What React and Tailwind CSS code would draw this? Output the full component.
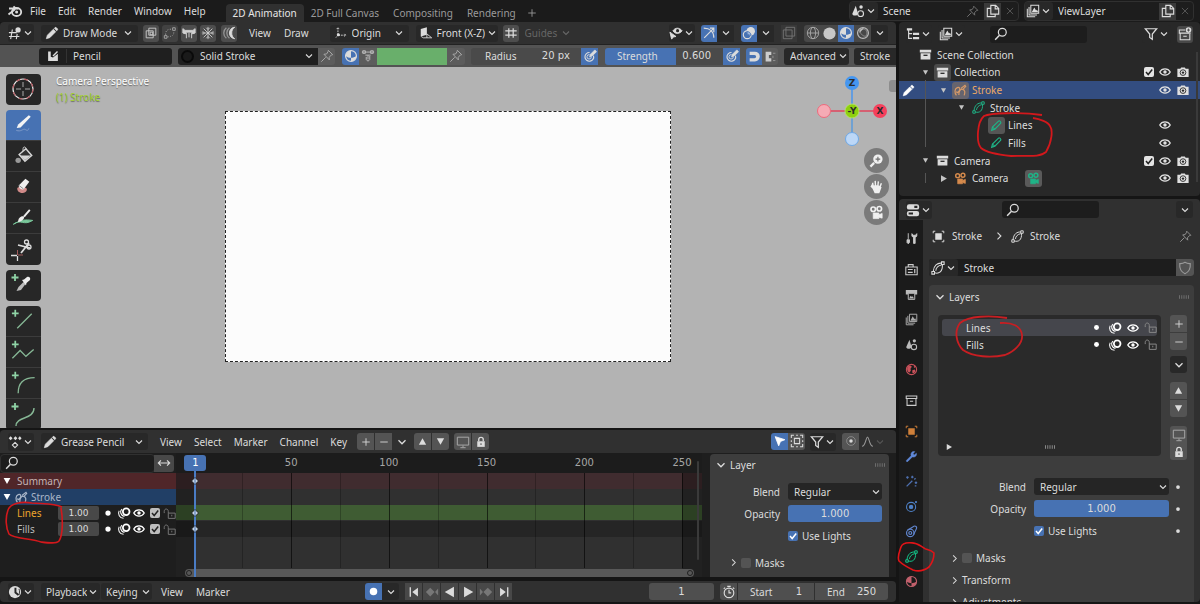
import { useState } from "react";
import clsx from "clsx";

const icons = {
    blender: (
        <>
            <path d="M2 5.5h7L6.5 3.4M1.5 11.5 8 6.2" strokeWidth="1.8" />
            <ellipse cx="9.6" cy="9" rx="4.6" ry="4" strokeWidth="1.8" />
            <circle cx="9.6" cy="9" r="1.5" fill="currentColor" stroke="none" />
        </>
    ),
    chevron: <path d="m4 6 4 4 4-4" strokeWidth="1.5" />,
    right: <path d="m6 3.5 4.5 4.5L6 12.5" strokeWidth="1.5" />,
    viewport: (
        <>
            <path d="M1 7.5h9M1 12h12M5 4 3 15M10.5 9 9.5 15" strokeWidth="1.3" />
            <circle cx="11.5" cy="4.5" r="3" fill="currentColor" stroke="none" />
        </>
    ),
    pencil: <path d="m1.5 14.5 1.2-4 6.8-6.8 2.8 2.8-6.8 6.8-4 1.2ZM10.5 2.7l1-1 1-.2 2 2-.2 1-1 1Z" fill="currentColor" strokeWidth=".8" />,
    pencilLine: <path d="m2 14 1-4 7.500-7.500c1-1 3.500 1 2.700 2.700L6 12.500ZM3 10l3 2.500" strokeWidth="1.400" />,
    boxes: <path d="M2.5 5.5h8v8h-8zM5.5 2.5h8v8h-8zM7 7h3v3H7z" />,
    points: (
        <>
            <path d="M1.5 11h3v3h-3zM11 2h3v3h-3z" />
            <path d="M5 12.5c8-1 7-3 7.5-7M3 10C3 4 6 4 10 3.5" strokeDasharray="1.2 1.8" />
        </>
    ),
    weights: <path d="M1 3v5l3 1 1-2h6l1 2 3-1V3l-2.5 2h-9ZM5 8v6M8 8v5M11 8v6" fill="currentColor" strokeWidth="1.1" />,
    snow: <path d="M8 1v14M1 8h14M3 3l10 10M13 3 3 13M6 2l2 2 2-2M6 14l2-2 2 2M2 6l2 2-2 2M14 6l-2 2 2 2" />,
    arcs: (
        <>
            <path d="M5 2C1 5 1 11 5 14M8.5 2c-4 3-4 9 0 12" opacity=".5" strokeWidth="1.5" />
            <path d="M14.5 1.5C10 4 10 12 14.5 14.5 6.500 14 6.500 2 14.5 1.5Z" fill="currentColor" />
        </>
    ),
    axes: (
        <>
            <path d="M4.5 2v8.5h9M4.5 10.5 2 13.5M3 3.5 4.5 2 6 3.5M12 9l1.5 1.5L12 12" strokeDasharray="2 1" />
            <circle cx="5" cy="10" r="1.8" fill="currentColor" stroke="none" />
        </>
    ),
    front: (
        <>
            <path d="M2 3.5 9 1.5v8.500L2 12Z" fill="currentColor" stroke="none" />
            <path d="M9 9l5.500 4.500H5L2.500 12M9 9.500v4" />
        </>
    ),
    grid: <path d="M1.5 5.5h13M1.5 10.5h13M5.5 2.5v11M10.5 2.5v11" strokeWidth="1.4" />,
    eyeArrow: (
        <>
            <path d="M4.5 5.5c2.5-4 7.5-4 10.5 0-3 4-8 4-10.5 0Z" fill="currentColor" />
            <circle cx="9.8" cy="5.3" r="1.8" fill="#282828" stroke="none" />
            <path d="m1 7 2 8 2-2.5L8 12Z" fill="currentColor" />
        </>
    ),
    gizmo: <path d="M2 2.5c7 0 11.5 4 11.5 11M2.5 13.5 13 3M9 2.5h4.5V7" strokeWidth="1.3" />,
    overlays: (
        <>
            <circle cx="10" cy="6" r="4.8" fill="currentColor" stroke="none" />
            <circle cx="6" cy="10" r="4.5" strokeWidth="1.3" />
            <path d="M5.4 6.4a4.500 4.500 0 0 1 5 4.200 4.800 4.800 0 0 1-5-4.200Z" fill="#9db7dc" stroke="#4772b3" />
        </>
    ),
    xray: <path d="M1.5 4.5h10v10h-10zM4.500 1.500h10v10h-10z" />,
    wire: (
        <>
            <circle cx="8" cy="8" r="6.5" />
            <ellipse cx="8" cy="8" rx="3" ry="6.5" />
            <path d="M1.5 8h13" />
        </>
    ),
    solid: <circle cx="8" cy="8" r="6.5" fill="currentColor" stroke="none" />,
    material: (
        <>
            <circle cx="8" cy="8" r="6.2" strokeWidth="1.4" />
            <path d="M8 1.8A6.2 6.2 0 0 0 1.8 8c2 1.6 4 2 6.2 2ZM8 10v4.200A6.2 6.2 0 0 0 14.2 8C12.5 9.500 10 10 8 10Z" fill="currentColor" stroke="none" />
        </>
    ),
    rendered: (
        <>
            <circle cx="8" cy="8" r="6.2" strokeWidth="1.4" />
            <path d="M12 5.5c-2-3-6-2.5-7.5.5.5 3 4 6.5 7 5.5 1-1.5 1.3-4 .5-6Z" opacity=".6" />
            <path d="M4 5c1.5-2 3-2.500 5-2.300L4 8Z" fill="currentColor" stroke="none" />
        </>
    ),
    brush: (
        <>
            <path d="M1.5 2v12.5h13V5L8 10 5 9V2Z" fill="currentColor" stroke="none" />
            <path d="m8 8 6-6" strokeWidth="2" />
        </>
    ),
    pin: <path d="m9.5 1.5 5 5-1.5.3-2.5 2.7.2 3L4.500 6l3-.3L9.200 3ZM6.500 9.500l-5 5" strokeWidth="1.1" />,
    nodes: <path d="M1 3.500h14M5 2v3H2V2ZM14 2v3h-3V2ZM5 7h6M6 9v3l2 2 2-2V8M8 7v5" strokeWidth="1.1" />,
    pressure: (
        <>
            <path d="M12 7.500a5 5 0 1 1-4.500-3.500" strokeWidth="1.3" />
            <path d="M9.500 9a2.500 2.500 0 1 1-2-2.500" />
            <path d="m7.500 9 1-3 5-5 2 2-5 5Z" fill="currentColor" strokeWidth=".8" />
        </>
    ),
    magnet: <path d="M2 2h6.500a6 6 0 0 1 0 12H2v-4h6a2 2 0 0 0 0-4H2Z" fill="currentColor" stroke="none" />,
    erase: (
        <>
            <path d="M2 2h7v4H6v4h3v4H2Z" fill="currentColor" stroke="none" />
            <path d="M11 4h3M11 7v3M11 13h3" opacity=".6" />
        </>
    ),
    scene: (
        <>
            <path d="M5.500 2 1.500 11c0 3 6 3 6.500 0Z" fill="currentColor" stroke="none" />
            <circle cx="11" cy="11" r="3.3" strokeWidth="1.3" />
            <circle cx="11.5" cy="3.5" r="2" fill="currentColor" stroke="none" />
        </>
    ),
    copy: <path d="M5.500 1.500h5.500l3.500 3.500v6.500h-9ZM10.500 2v3.500H14M5 5H1.500v9.500h9V12" strokeWidth="1.3" />,
    x: <path d="m3 3 10 10M13 3 3 13" strokeWidth="1.2" />,
    images: (
        <>
            <path d="M5.500 1.500h9v9h-9zM3.500 3.500v9h9M1.500 5.500v9h9" strokeWidth="1.2" />
            <path d="m6.500 9.500 3-5.500 2 3.500 1-1 1.500 3Z" fill="currentColor" stroke="none" />
        </>
    ),
    tree: (
        <>
            <path d="M3 3v10h4M3 7.500h4" strokeWidth="1.3" />
            <path d="M1 1.500h6v2.500H1zM8 6.500h7V9H8zM8 11.500h7V14H8z" fill="currentColor" stroke="none" />
        </>
    ),
    search: (
        <>
            <circle cx="9.5" cy="6" r="4.5" strokeWidth="1.4" />
            <path d="m6.300 9.500-5 5" strokeWidth="1.7" />
        </>
    ),
    filter: <path d="M1.500 2h13L9.500 8v6l-3-2V8Z" strokeWidth="1.4" />,
    newColl: (
        <>
            <path d="M8 3.500H1.500v3.500h13M2.500 7v7.500h11V8M6 10.500h4" strokeWidth="1.2" />
            <circle cx="12" cy="3.5" r="3.2" fill="currentColor" stroke="none" />
            <path d="M12 1.800v3.400M10.300 3.500h3.400" stroke="#484848" />
        </>
    ),
    archive: (
        <>
            <path d="M1 2h14v3.500H1zM2 6.500h12V14H2z" fill="currentColor" stroke="none" />
            <path d="M5.500 9h5" stroke="#282828" strokeWidth="1.6" />
        </>
    ),
    archiveLine: <path d="M1.500 2.500h13v3h-13zM2.500 6v8h11V6M6 9h4" strokeWidth="1.3" />,
    gpData: (
        <>
            <path d="M12 1h3v3h-3zM1 12h3v3H1z" strokeWidth="1.2" />
            <path d="M12 2.500C7.500 2 3 5 2.500 12" strokeWidth="1.2" />
            <path d="M4 13.500c5 1.500 9.500-1 9-9.500" strokeWidth="1.2" />
            <path d="M12 4.500C8.500 5 5.500 8 5.500 11" strokeWidth="1.2" />
        </>
    ),
    gpObject: (
        <>
            <path d="M3 14C.5 11 .5 6 4 4.500c3-1 4 1.500 2.500 4S3 11.500 3.500 9" strokeWidth="1.5" />
            <path d="M6 13.500C5.500 9 8 6 10.500 6.500c3 .5 3.500 4 2 7.500" strokeWidth="1.5" />
            <path d="m8.500 5.500 5-4 1 1.500-3.500 3.500" strokeWidth="1.3" />
        </>
    ),
    movie: (
        <>
            <circle cx="4.5" cy="4.5" r="2.4" strokeWidth="1.8" />
            <circle cx="11" cy="4" r="2.4" strokeWidth="1.8" />
            <path d="M4.500 8.500h6v2l3.500-1.500v5L10.500 13v1.500h-6Z" fill="currentColor" strokeWidth=".8" />
        </>
    ),
    eye: (
        <>
            <path d="M1 8c3-5.500 11-5.500 14 0-3 5.500-11 5.500-14 0Z" strokeWidth="1.7" />
            <circle cx="8" cy="8" r="2.300" fill="currentColor" stroke="none" />
        </>
    ),
    photo: (
        <>
            <path d="M.5 3.500h4l1-1.500h5l1 1.500h4V14.500H.5Z" fill="currentColor" stroke="none" />
            <circle cx="8" cy="8.8" r="3.800" stroke="#282828" strokeWidth="1.2" />
            <circle cx="8" cy="8.8" r="1.600" fill="#282828" stroke="none" />
        </>
    ),
    props: (
        <>
            <rect x="1" y="1.500" width="14" height="6" rx="2.5" fill="currentColor" stroke="none" />
            <rect x="1" y="9" width="14" height="6" rx="2.5" fill="currentColor" stroke="none" />
            <path d="M9.500 4.500h3.500M3 12h5" stroke="#282828" strokeWidth="2.5" />
        </>
    ),
    object: (
        <>
            <path d="M4 1.500H1.500V4M12 1.500h2.500V4M4 14.500H1.500V12M12 14.500h2.500V12" strokeWidth="1.2" />
            <path d="M4 4h8v8H4z" fill="currentColor" stroke="none" />
        </>
    ),
    shield: <path d="M8 1.500c2 1.300 4 1.700 6 1.500.5 6-1.500 9.500-6 11.500C3.500 12.500 1.500 9 2 3c2 .2 4-.2 6-1.500Z" strokeWidth="1.3" />,
    tools: <path d="M4 1.500v7M2.500 9.500h3V13l-1.500 1.500L2.500 13ZM8.500 2v3l2 2v7h2V7l2-2V2l-1.500 2h-3Z" fill="currentColor" strokeWidth="1.1" />,
    render: (
        <>
            <path d="M1 5h14v9.500H1zM4 5V2h6v3" strokeWidth="1.3" />
            <path d="M3.500 8h6M3.500 11.500h6M12 7.500v5" strokeWidth="1.5" />
        </>
    ),
    printer: (
        <>
            <path d="M1 2.500h14V8h-3V6.500H4V8H1Z" fill="currentColor" stroke="none" />
            <path d="M4 6.500h8V14H4Z" strokeWidth="1.2" />
            <path d="m5 13 2-3.500 1.500 1.500 1-1 1.500 3Z" fill="currentColor" stroke="none" />
        </>
    ),
    world: (
        <>
            <circle cx="8" cy="8" r="6.3" strokeWidth="1.3" />
            <path d="M3 5c2-3 4-2 5-1S6 7 7 8s-1 3-2 4C3 10 2 8 3 5ZM9 9l3-1 1 2-2 2.500L9 12ZM11 3l2 2-2 1Z" fill="currentColor" stroke="none" />
        </>
    ),
    wrench: <path d="m2 12.500 5.500-5.500c-1-3 1.500-6 4.500-5L10 4.500 11.500 6 14 4c1 3-2 5.500-5 4.500L3.500 14C2 15 1 13.500 2 12.500Z" fill="currentColor" strokeWidth=".6" />,
    wand: <path d="m2 14 7-7M11.500 5.500 13 4M3 1.500v3M1.500 3h3M9 1v3M7.500 2.500h3M13.500 8v3M12 9.500h3M12 13.500h2" strokeWidth="1.6" />,
    physics: (
        <>
            <circle cx="7.5" cy="8.5" r="5.6" strokeWidth="1.3" />
            <circle cx="7.5" cy="8.5" r="2.7" fill="currentColor" stroke="none" />
            <circle cx="13.5" cy="2.5" r="1.4" fill="currentColor" stroke="none" />
        </>
    ),
    constraint: (
        <>
            <circle cx="6.5" cy="9.8" r="4.6" strokeWidth="1.5" />
            <circle cx="6.5" cy="9.8" r="1.8" strokeWidth="1.5" />
            <path d="M3 6.500 11 1.500c2-1 4 1 3 3l-3.500 7.500" strokeWidth="1.4" />
        </>
    ),
    onion: (
        <>
            <circle cx="10.5" cy="6.5" r="3.8" strokeWidth="2" />
            <path d="M5.500 3.500c-2.500 2.500-1.500 7.500 3 8.500M2.500 5.500c-2 3.500.5 8.500 5 8.500" strokeWidth="1.2" />
        </>
    ),
    unlock: <path d="M6.500 7.500H15V14H6.500zM6.500 7.500V5.500C6.500 1.500 1.500 1.500 1.500 5.500v2M10.800 9.500v2" strokeWidth="1.2" />,
    lock: (
        <>
            <path d="M3 7h10v7.500H3z" fill="currentColor" stroke="none" />
            <path d="M5 7V4.500c0-3.500 6-3.500 6 0V7" strokeWidth="1.8" />
            <path d="M8 9.500v2.500" stroke="#545454" strokeWidth="1.4" />
        </>
    ),
    screen: <path d="M1.500 2.500h13v9h-13zM8 12v2M5 14.500h6" strokeWidth="1.1" />,
    plus: <path d="M8 2v12M2 8h12" strokeWidth="1.4" />,
    minus: <path d="M2 8h12" strokeWidth="1.4" />,
    up: <path d="m8 4 4.500 8h-9Z" fill="currentColor" stroke="none" />,
    down: <path d="m8 12 4.500-8h-9Z" fill="currentColor" stroke="none" />,
    play: <path d="m3.500 2 10.500 6-10.500 6Z" fill="currentColor" stroke="none" />,
    back: <path d="M12.500 2 2 8l10.500 6Z" fill="currentColor" stroke="none" />,
    first: <path d="M3 2.500h1.500v11H3zM12.500 3v10L6 8Z" fill="currentColor" stroke="none" />,
    last: <path d="M11.500 2.500H13v11h-1.500zM3.500 3v10L10 8Z" fill="currentColor" stroke="none" />,
    prevKey: <path d="m6 3 5 5-5 5-5-5ZM15 4v8l-3.500-4Z" fill="currentColor" stroke="none" />,
    nextKey: <path d="m10 3 5 5-5 5-5-5ZM1 4v8l3.500-4Z" fill="currentColor" stroke="none" />,
    record: <circle cx="8" cy="8" r="4" fill="currentColor" stroke="none" />,
    dot: <circle cx="8" cy="8" r="3" fill="currentColor" stroke="none" />,
    cursorArrow: <path d="m2.500 3 11 3.500-5 2-2 5Z" fill="currentColor" />,
    frameSel: <path d="M4.500 1.500h-3v3M11.500 1.500h3v3M4.500 14.500h-3v-3M11.500 14.500h3v-3M7 1.500h2M7 14.500h2M1.500 7v2M14.500 7v2M5 5h6v6H5z" strokeWidth="1.2" />,
    proportional: (
        <>
            <circle cx="8" cy="8" r="5" opacity=".4" />
            <circle cx="8" cy="8" r="2" fill="currentColor" stroke="none" />
        </>
    ),
    curve: <path d="M1.500 14C6 13 6 2.500 8 2.500S10 13 14.500 14" strokeWidth="1.3" />,
    dope: (
        <>
            <path d="m3 1.500 2.200 2.200L3 6 .8 3.700ZM8.500 1.500l2.200 2.200L8.500 6 6.300 3.700ZM13.500 1.500l2 2.200-2 2.300-2-2.300Z" fill="currentColor" stroke="none" />
            <path d="m8 8.500 3 3-3 3-3-3Z" strokeWidth="1.3" />
        </>
    ),
    arrows: <path d="M1.500 8h13M4.500 5l-3 3 3 3M11.500 5l3 3-3 3" strokeWidth="1.3" />,
    clock: (
        <>
            <circle cx="8" cy="8" r="7" fill="currentColor" stroke="none" />
            <path d="M8.500 3v5.500l3.500 3" stroke="#282828" strokeWidth="2.2" />
            <path d="M12.500 4.500c1 2 1 5 0 7" stroke="#282828" />
        </>
    ),
    stopwatch: (
        <>
            <circle cx="8" cy="9" r="5.5" strokeWidth="1.3" />
            <path d="M8 5.500V9h2.500M6 1.500h4M12.500 3l1.500 1.500M2 4.500 3.500 3" strokeWidth="1.3" />
        </>
    ),
    grip: <path d="M0 6.500h16M0 9.500h16" strokeWidth="1.500" strokeDasharray="1.600 2" />,
    zoomIn: (
        <>
            <circle cx="9.5" cy="6.5" r="5" fill="currentColor" stroke="none" />
            <path d="m5.500 10.500-4 4" strokeWidth="2.4" />
            <path d="M9.500 4v5M7 6.500h5" stroke="#6e6e6e" strokeWidth="1.2" />
        </>
    ),
    hand: <path d="m2 7.500 3 3-1.200-6.500M7 8.500 6.600 2M9.300 8.500 10 2.500M11.300 9.500l1.900-5M4 9l2.500 5.500h4L12.500 9 10 7.500H6Z" strokeWidth="1.500" fill="currentColor" />,
};

function Icon({ name, className = "size-4" }) {
    return (
        <svg
            viewBox="0 0 16 16"
            fill="none"
            stroke="currentColor"
            strokeWidth="1"
            aria-hidden="true"
            className={clsx("shrink-0", className)}
        >
            {icons[name]}
        </svg>
    );
}

function IconButton({ icon, label, className = "w-4 rounded-[3px] bg-[#4d4d4d]", size = "size-[14px]" }) {
    return (
        <button aria-label={label} className={clsx("flex h-[17px] shrink-0 items-center justify-center", className)}>
            <Icon name={icon} className={size} />
        </button>
    );
}

function MenuButton({ icon, label, className = "w-[26px]" }) {
    return (
        <button
            aria-label={label}
            className={clsx("flex h-[18px] shrink-0 items-center justify-center rounded-[3px] bg-[#282828]", className)}
        >
            <Icon name={icon} className="size-[14px]" />
            <Icon name="chevron" className="size-[12px]" />
        </button>
    );
}

function Select({ icon, label, value, className }) {
    return (
        <label className={clsx("flex h-[17px] shrink-0 items-center rounded-[3px]", className)}>
            {icon && <Icon name={icon} className="mr-1 size-[14px]" />}
            <select aria-label={label} className="min-w-0 flex-1 appearance-none bg-transparent outline-none">
                <option>{value}</option>
            </select>
            <Icon name="chevron" className="size-[12px]" />
        </label>
    );
}

function SearchBox({ className }) {
    return (
        <label className={clsx("flex h-[17px] items-center rounded-[3px] bg-[#1d1d1d] px-1", className)}>
            <Icon name="search" className="size-[14px]" />
            <input aria-label="Search" className="w-full min-w-0 bg-transparent outline-none" />
        </label>
    );
}

function Check({ label, checked, className = "bg-[#545454] checked:bg-[#4772b3]", mark = "text-white", children }) {
    return (
        <label className="flex shrink-0 items-center gap-1">
            <span className="relative flex">
                <input
                    type="checkbox"
                    aria-label={label}
                    defaultChecked={checked}
                    className={clsx("peer size-[10px] appearance-none rounded-[2px]", className)}
                />
                <svg viewBox="0 0 10 10" className={clsx("pointer-events-none absolute inset-0 hidden peer-checked:block", mark)}>
                    <path d="m2 5 2.200 2.500L8.200 2.500" fill="none" stroke="currentColor" strokeWidth="1.5" />
                </svg>
            </span>
            {children}
        </label>
    );
}

function NumField({ label, value, className }) {
    return (
        <label className={clsx("flex h-[17px] items-center", className)}>
            <span>{label}</span>
            <input
                defaultValue={value}
                className="w-full min-w-0 bg-transparent text-right font-[DejaVu_Sans] outline-none"
            />
        </label>
    );
}

const menus = ["File", "Edit", "Render", "Window", "Help"];
const workspaces = ["2D Animation", "2D Full Canvas", "Compositing", "Rendering"];

function TopBar() {
    const [active, setActive] = useState("2D Animation");

    return (
        <header className="flex h-[22px] shrink-0 items-center bg-[#1b1b1b] px-[7px]">
            <Icon name="blender" className="size-4" />
            <nav className="ml-[7px] flex gap-3">
                {menus.map((m) => (
                    <button key={m}>{m}</button>
                ))}
            </nav>
            <div className="ml-5 flex self-end">
                {workspaces.map((w) => (
                    <button
                        key={w}
                        onClick={() => setActive(w)}
                        className={clsx(
                            "h-[18px] rounded-t-[4px] px-[7px]",
                            active === w ? "bg-[#303030] text-[#e6e6e6]" : "text-[#9a9a9a]"
                        )}
                    >
                        {w}
                    </button>
                ))}
                <button aria-label="Add workspace" className="ml-1 text-[#9a9a9a]">
                    <Icon name="plus" className="size-[10px]" />
                </button>
            </div>
            <div className="ml-auto flex gap-[7px]">
                <IdPicker icon="scene" label="Scene" pin />
                <IdPicker icon="images" label="ViewLayer" />
            </div>
        </header>
    );
}

function IdPicker({ icon, label, pin }) {
    return (
        <div className="flex h-[18px] w-[168px] items-center rounded-[3px] bg-[#1d1d1d] outline-1 outline-[#303030]">
            <MenuButton icon={icon} label={`Browse ${label}`} className="w-[28px]" />
            <input aria-label={label} defaultValue={label} className="w-full min-w-0 bg-transparent px-[5px] outline-none" />
            {pin && <Icon name="pin" className="mr-[5px] size-[13px] text-[#777]" />}
            <IconButton icon="copy" label={`New ${label}`} className="w-[17px] bg-[#3a3a3a]" />
            <IconButton icon="x" label={`Remove ${label}`} className="w-[17px] text-[#666]" size="size-[10px]" />
        </div>
    );
}

function ViewportHeader() {
    return (
        <div className="flex h-[22px] shrink-0 items-center rounded-t-[4px] bg-[#303030] px-2">
            <MenuButton icon="viewport" label="Editor type" />
            <Select icon="pencil" label="Mode" value="Draw Mode" className="ml-[7px] w-[97px] bg-[#282828] px-1" />
            <div className="ml-[5px] flex gap-[3px] text-[#d0d0d0]">
                <IconButton icon="boxes" label="Multiframe" />
                <IconButton icon="points" label="Points" className="w-4 rounded-[3px] bg-[#424242] text-[#aaa]" />
                <IconButton icon="weights" label="Weights" />
                <IconButton icon="snow" label="Additive" />
            </div>
            <div className="ml-[5px]">
                <IconButton icon="arcs" label="Onion" />
            </div>
            <nav className="ml-3 flex gap-[13px]">
                <button>View</button>
                <button>Draw</button>
            </nav>
            <Select icon="axes" label="Stroke placement" value="Origin" className="ml-[21px] w-[79px] bg-[#282828] px-1" />
            <Select icon="front" label="Drawing plane" value="Front (X-Z)" className="ml-[7px] w-[82px] bg-[#282828] pl-[3px]" />
            <div className="ml-[5px] flex gap-[6px]">
                <IconButton icon="grid" label="Use guides" />
                <Select label="Guides" value="Guides" className="w-[47px] text-[#666]" />
            </div>
            <div className="ml-auto flex items-center">
                <MenuButton icon="eyeArrow" label="Visibility" className="mr-[6px]" />
                <IconButton icon="gizmo" label="Gizmos" className="w-4 rounded-l-[3px] bg-[#4772b3]" />
                <IconButton icon="chevron" label="Gizmo options" className="mr-[7px] w-[17px] bg-[#282828]" size="size-[12px]" />
                <IconButton icon="overlays" label="Overlays" className="w-4 rounded-l-[3px] bg-[#4772b3]" />
                <IconButton icon="chevron" label="Overlay options" className="mr-[7px] w-[17px] bg-[#282828]" size="size-[12px]" />
                <IconButton icon="xray" label="X-Ray" className="mr-[7px] w-4 bg-[#383838] text-[#777]" />
                <IconButton icon="wire" label="Wireframe" className="w-[17px] rounded-l-[3px] bg-[#484848] text-[#aaa]" />
                <IconButton icon="solid" label="Solid" className="w-[17px] bg-[#484848] text-[#c8c8c8]" size="size-[15px]" />
                <IconButton icon="material" label="Material preview" className="w-[16px] bg-[#4772b3]" />
                <IconButton icon="rendered" label="Rendered" className="w-[17px] bg-[#484848] text-[#bbb]" />
                <IconButton icon="chevron" label="Shading options" className="w-[17px] rounded-r-[3px] bg-[#282828]" size="size-[12px]" />
            </div>
        </div>
    );
}

function ToolSettings() {
    return (
        <div className="flex h-[23px] shrink-0 items-center overflow-hidden border-t border-[#222] bg-[#535353] pl-[39px]">
            <div className="flex h-[17px] w-[133px] shrink-0 items-center rounded-[3px] bg-[#1f1f1f]">
                <span className="flex w-[27px] shrink-0 justify-center">
                    <Icon name="brush" className="size-[12px]" />
                </span>
                <input aria-label="Brush" defaultValue="Pencil" className="w-full min-w-0 border-l border-[#333] pl-[6px] outline-none" />
            </div>
            <div className="ml-[6px] flex shrink-0">
                <label className="flex h-[17px] w-[140px] items-center rounded-l-[3px] bg-[#1f1f1f] px-[3px]">
                    <span className="mr-[6px] size-[13px] shrink-0 rounded-full border-2 border-[#0a0a0a] bg-[#1a1a1a]" />
                    <select aria-label="Material" className="min-w-0 flex-1 appearance-none bg-transparent outline-none">
                        <option>Solid Stroke</option>
                    </select>
                    <Icon name="chevron" className="size-[12px]" />
                </label>
                <IconButton icon="pin" label="Pin material" className="w-[17px] rounded-r-[3px] bg-[#5c5c5c] text-[#aaa]" />
            </div>
            <div className="ml-[7px] flex shrink-0">
                <IconButton icon="material" label="Use material color" className="w-[17px] rounded-l-[3px] bg-[#4772b3]" />
                <IconButton icon="nodes" label="Use vertex color" className="w-[18px] bg-[#5c5c5c] text-[#bbb]" />
                <button aria-label="Color" className="h-[17px] w-[70px] bg-[#69af6b]" />
                <IconButton icon="pin" label="Pin color" className="w-[18px] rounded-r-[3px] bg-[#5c5c5c] text-[#aaa]" />
            </div>
            <div className="ml-[6px] flex shrink-0">
                <NumField label="Radius" value="20 px" className="w-[110px] rounded-l-[3px] bg-[#4a4a4a] pr-[11px] pl-[14px]" />
                <IconButton icon="pressure" label="Radius pressure" className="w-[17px] bg-[#4772b3]" />
            </div>
            <div className="ml-[7px] flex shrink-0">
                <NumField
                    label="Strength"
                    value="0.600"
                    className="w-[118px] rounded-l-[3px] bg-[#4a4a4a] bg-linear-to-r from-[#4772b3] from-60% to-[#4a4a4a] to-60% pr-[12px] pl-[12px]"
                />
                <IconButton icon="pressure" label="Strength pressure" className="w-[17px] bg-[#4772b3]" />
            </div>
            <div className="ml-[6px] flex shrink-0">
                <IconButton icon="magnet" label="Caps round" className="w-[16px] rounded-l-[3px] bg-[#4772b3]" size="size-[13px]" />
                <IconButton icon="erase" label="Caps flat" className="w-[16px] rounded-r-[3px] bg-[#5c5c5c] text-[#ccc]" size="size-[13px]" />
            </div>
            <Select label="Advanced" value="Advanced" className="ml-[6px] w-[65px] bg-[#282828] pl-[6px]" />
            <Select label="Stroke" value="Stroke" className="ml-[5px] w-[54px] bg-[#282828] pl-[6px]" />
        </div>
    );
}

const plus = <path d="M9 4v7M5.500 7.500h7" stroke="#8fd3a6" strokeWidth="1.8" />;
const shapeStroke = { fill: "none", stroke: "#86b795", strokeWidth: 1.4 };

const toolGroups = [
    [
        {
            name: "Cursor",
            art: (
                <>
                    <circle cx="17" cy="15" r="10" fill="none" stroke="#e8e8e8" strokeWidth="1.2" />
                    <circle cx="17" cy="15" r="10" fill="none" stroke="#b2555c" strokeWidth="1.2" strokeDasharray="4 4" />
                    <path d="M17 8v5M17 17v5M10 15h5M19 15h5" stroke="#aaa" />
                </>
            ),
        },
    ],
    [
        {
            name: "Draw",
            art: (
                <>
                    <path d="m10.500 18.500 1.500-3.500L23 5.500l2 1.500-10.500 11Z" fill="#f4f4f4" />
                    <path d="M10 21c5 2 7-2 9-1s3 2 4-1" fill="none" stroke="#7f9cc9" />
                </>
            ),
        },
        {
            name: "Fill",
            art: (
                <>
                    <path d="M17 13V8c0-3 4-2 3 1" fill="none" stroke="#ccc" />
                    <path d="m13 14 7-6 6 7-7 6Z" fill="#333" stroke="#d6d6d6" strokeWidth="1.5" />
                    <path d="M14 15h11l-6 5Z" fill="#d6d6d6" />
                    <circle cx="12" cy="20" r="2.800" fill="#999" />
                </>
            ),
        },
        {
            name: "Erase",
            art: (
                <>
                    <path d="M11 17c0-2 10-2 10 1 0 5-10 5-10-1Z" fill="#d08a88" />
                    <path d="m12.500 14 7-7 4 3-6 8c-2 .5-5-1-5-4Z" fill="#eee" />
                    <path d="m13 14 4.500 3.500" stroke="#888" />
                </>
            ),
        },
        {
            name: "Tint",
            art: (
                <>
                    <path d="M7 22c8-6 10 2 20-4-8-1-11-1-20 4Z" fill="#79c79a" stroke="#79c79a" />
                    <path d="m18 14 6-7" stroke="#eee" strokeWidth="2" />
                    <path d="M12 20c-.5-4 3-7 6-6 1 2-2 5-6 6Z" fill="#eee" />
                </>
            ),
        },
        {
            name: "Cutter",
            art: (
                <>
                    <path d="m15 19 8-10M12 11l12 3" stroke="#ddd" strokeWidth="1.8" />
                    <circle cx="20.5" cy="8" r="2" fill="none" stroke="#ddd" strokeWidth="1.3" />
                    <circle cx="23" cy="13" r="2" fill="none" stroke="#ddd" strokeWidth="1.3" />
                    <path d="M5 21.500h6M11.500 22v5" stroke="#ddd" strokeWidth="1.3" />
                    <path d="M12 21h5M11.500 16v5" stroke="#a05a5a" />
                </>
            ),
        },
    ],
    [
        {
            name: "Eyedropper",
            art: (
                <>
                    {plus}
                    <path d="m10.500 21 2-4 5-5 2 2-4.500 6Z" fill="#bbb" />
                    <path d="m16 10 2-.5 3-2.500c2-1 4 1 3 3l-3.500 3-.5 2.500Z" fill="#eee" />
                </>
            ),
        },
    ],
    [
        { name: "Line", art: <>{plus}<path d="m11 23 15-15" {...shapeStroke} /></> },
        { name: "Polyline", art: <>{plus}<path d="m6 22 8-8 6 6 8-7" {...shapeStroke} /></> },
        { name: "Arc", art: <>{plus}<path d="M12 26c0-10 5-16 17-16" {...shapeStroke} /></> },
        { name: "Curve", art: <>{plus}<path d="M10 27c0-10 18-6 18-18" {...shapeStroke} /></> },
    ],
];

function Toolbar() {
    const [tool, setTool] = useState("Draw");

    return (
        <div className="absolute top-[7px] bottom-0 left-[6px] flex w-[35px] flex-col gap-[5px] overflow-hidden">
            {toolGroups.map((group, i) => (
                <div key={i} className="flex shrink-0 flex-col divide-y divide-[#3c3c3c] overflow-hidden rounded-[4px]">
                    {group.map((t) => (
                        <button
                            key={t.name}
                            aria-label={t.name}
                            onClick={() => setTool(t.name)}
                            className={clsx("h-[31px]", tool === t.name ? "bg-[#4772b3]" : "bg-[#272727]")}
                        >
                            <svg viewBox="0 0 35 31" className="size-full">{t.art}</svg>
                        </button>
                    ))}
                </div>
            ))}
        </div>
    );
}

function Gizmo() {
    return (
        <svg viewBox="0 0 76 76" className="absolute top-[6px] right-[6px] size-[76px]">
            <path d="M38 10v28" stroke="#4a96ee" strokeWidth="1.5" />
            <path d="M38 38v28" stroke="#5a9bdc" strokeWidth="1.5" />
            <path d="M10 38h56" stroke="#e0455c" strokeWidth="1.5" />
            <circle cx="38" cy="10" r="7" fill="#4596f0" />
            <circle cx="38" cy="66" r="6.5" fill="#bcd7f7" stroke="#6ea9e8" />
            <circle cx="10" cy="38" r="6.5" fill="#f5abb5" stroke="#ee6a7c" />
            <circle cx="66" cy="38" r="7" fill="#f5405c" />
            <circle cx="38" cy="38" r="7" fill="#8fd00f" stroke="#b9e86a" strokeWidth=".8" />
            <g fontFamily="DejaVu Sans, sans-serif" fontSize="9" fontWeight="700" fill="#2c2c2c" textAnchor="middle">
                <text x="38" y="13">Z</text>
                <text x="38" y="41">-Y</text>
                <text x="66" y="41">X</text>
            </g>
        </svg>
    );
}

function Viewport() {
    return (
        <section className="relative flex-1 overflow-hidden bg-[#b3b3b3]">
            <div className="mx-auto mt-[44px] h-[251px] w-[446px] border border-dashed border-[#222] bg-[#fcfcfc]" />
            <Toolbar />
            <div className="absolute top-[6px] left-[56px] leading-4 text-white [text-shadow:0_1px_1px_#666]">
                <p>Camera Perspective</p>
                <p className="text-[#a4d233]">(1) Stroke</p>
            </div>
            <Gizmo />
            <button aria-label="Sidebar" className="absolute top-[13px] right-0 h-[12px] w-[7px] rounded-l-[3px] bg-[#8d8d8d]" />
            <div className="absolute top-[81px] right-[7px] flex flex-col gap-px">
                {["zoomIn", "hand", "movie"].map((name) => (
                    <button key={name} aria-label={name} className="flex size-[25px] items-center justify-center rounded-full bg-[#7a7a7a] text-[#f0f0f0]">
                        <Icon name={name} className="size-[15px]" />
                    </button>
                ))}
            </div>
        </section>
    );
}

function DopeHeader() {
    return (
        <div className="flex h-[23px] shrink-0 items-center rounded-t-[4px] bg-[#303030] px-2">
            <MenuButton icon="dope" label="Editor type" />
            <Select icon="pencil" label="Mode" value="Grease Pencil" className="ml-[7px] w-[107px] bg-[#282828] pr-[3px] pl-[2px]" />
            <nav className="ml-3 flex gap-3">
                {["View", "Select", "Marker", "Channel", "Key"].map((m) => (
                    <button key={m}>{m}</button>
                ))}
            </nav>
            <div className="ml-[10px] flex gap-px">
                <IconButton icon="plus" label="Add layer" className="w-[17px] rounded-l-[3px] bg-[#545454]" size="size-[10px]" />
                <IconButton icon="minus" label="Remove layer" className="w-[17px] bg-[#545454]" size="size-[10px]" />
                <IconButton icon="chevron" label="Layer options" className="w-[17px]" />
            </div>
            <div className="ml-[4px] flex gap-px">
                <IconButton icon="up" label="Move up" className="w-[17px] rounded-l-[3px] bg-[#545454]" size="size-[13px]" />
                <IconButton icon="down" label="Move down" className="w-[17px] rounded-r-[3px] bg-[#545454]" size="size-[13px]" />
            </div>
            <div className="ml-[5px] flex gap-px">
                <IconButton icon="screen" label="Isolate visibility" className="w-[17px] rounded-l-[3px] bg-[#545454] text-[#aaa]" />
                <IconButton icon="lock" label="Isolate lock" className="w-[17px] rounded-r-[3px] bg-[#545454]" size="size-[12px]" />
            </div>
            <div className="ml-auto flex">
                <IconButton icon="cursorArrow" label="Only selected" className="w-[17px] rounded-l-[3px] bg-[#4772b3] text-white" />
                <IconButton icon="frameSel" label="Show hidden" className="mr-[5px] w-[17px] rounded-r-[3px] bg-[#545454]" />
                <MenuButton icon="filter" label="Filter" className="mr-[6px]" />
                <IconButton icon="proportional" label="Proportional" className="w-[17px] rounded-l-[3px] bg-[#545454]" />
                <button aria-label="Falloff" className="flex w-[29px] items-center justify-center text-[#999]">
                    <Icon name="curve" className="size-[13px]" />
                    <Icon name="chevron" className="size-[12px] text-[#555]" />
                </button>
            </div>
        </div>
    );
}

const layers = [
    { name: "Lines", color: "text-[#eda52c]" },
    { name: "Fills", color: "text-[#b9b9b9]" },
];

function ChannelList() {
    return (
        <div className="relative w-[176px] shrink-0 bg-[#1e1e1e]">
            <div className="flex h-[20px] items-center pr-[2px] pl-px">
                <SearchBox className="flex-1 outline-1 outline-[#303030]" />
                <IconButton icon="arrows" label="Mirror" className="w-[20px] rounded-r-[3px] bg-[#484848]" />
            </div>
            <button className="flex h-4 w-full items-center bg-[#502629] pl-px text-[#c4b4b4]">
                <Icon name="down" className="mr-[4px] size-[12px] text-white" />
                Summary
            </button>
            <button className="flex h-4 w-full items-center bg-[#213f66] pl-px text-[#a9b6c8]">
                <Icon name="down" className="mr-[2px] size-[12px] text-white" />
                <Icon name="gpObject" className="mr-[3px] size-[13px]" />
                Stroke
            </button>
            {layers.map((l) => (
                <div key={l.name} className="flex h-4 items-center pl-[17px]">
                    <button className={clsx("w-[42px] text-left", l.color)}>{l.name}</button>
                    <input
                        aria-label={`${l.name} opacity`}
                        defaultValue="1.00"
                        className="h-[14px] w-[41px] rounded-[2px] bg-[#484848] text-center font-[DejaVu_Sans] text-[9px] outline-none"
                    />
                    <Icon name="dot" className="ml-[2px] size-[14px] text-white" />
                    <Icon name="onion" className="mx-[2px] size-[14px] text-white" />
                    <Icon name="eye" className="mr-[5px] size-[12px] text-white" />
                    <Check label={`${l.name} enabled`} checked className="bg-[#bdbdbd]" mark="text-[#222]" />
                    <Icon name="unlock" className="ml-[3px] size-[13px] text-[#777]" />
                </div>
            ))}
            <svg viewBox="0 0 70 60" className="pointer-events-none absolute top-[45px] left-0 h-[60px] w-[70px]">
                <path d="M62 9c-8-4-20-3-30-4C20 3 10 6 8 12 5 20 6 30 9 36c5 5 20 4 32 8 8 1 15 2 18-1 4-6 4-22 2-33" fill="none" stroke="#d3181c" strokeWidth="1.6" />
            </svg>
        </div>
    );
}

// horizontal place of a frame, as a share of the timeline width
const at = (frame) => `${3.7 + (frame - 1) * 0.3715}%`;

function Timeline() {
    return (
        <div className="relative flex-1 overflow-hidden bg-[#303030] font-[DejaVu_Sans]">
            <div className="h-[20px] bg-[#1c1c1c]" />
            <div className="h-4 bg-[#402c2f]" />
            <div className="h-4" />
            <div className="mb-px h-[15px] bg-[#3f5c33]" />
            <div className="h-4 bg-[#252525]" />
            <div className="absolute top-[20px] bottom-0 left-0 bg-black/30" style={{ width: at(1) }} />
            <div className="absolute top-[20px] right-0 bottom-0 bg-black/30" style={{ left: at(250) }} />
            {[25, 75, 125, 175, 225].map((f) => (
                <div key={f} className="absolute top-[20px] bottom-[9px] w-px bg-black/25" style={{ left: at(f) }} />
            ))}
            {[50, 100, 150, 200, 250].map((f) => (
                <div key={f} className="absolute top-[20px] bottom-[9px] w-px bg-black/60" style={{ left: at(f) }} />
            ))}
            {[50, 100, 150, 200, 250].map((f) => (
                <span
                    key={f}
                    className="absolute top-0 flex h-[20px] -translate-x-1/2 items-center text-[#a6a6a6]"
                    style={{ left: at(f) }}
                >
                    {f}
                </span>
            ))}
            <div className="absolute right-[8px] bottom-0 left-[9px] flex h-2 items-center justify-between rounded-full bg-[#585858] px-px">
                <span className="size-[6px] rounded-full border border-[#222]" />
                <span className="size-[6px] rounded-full border border-[#222]" />
            </div>
            <div className="absolute top-2 right-[3px] bottom-[17px] w-[2px] rounded-full bg-[#3a3a3a]" />
            <div className="absolute inset-y-0 flex w-[22px] -translate-x-1/2 flex-col items-center" style={{ left: at(1) }}>
                <span className="mt-[2px] flex h-[16px] w-[22px] shrink-0 items-center justify-center rounded-[3px] bg-[#4772b3] text-white">1</span>
                <div className="w-[2px] flex-1 bg-[#4a7cc4]" />
            </div>
            {["top-[24px]", "top-[56px]", "top-[72px]"].map((top) => (
                <svg key={top} viewBox="0 0 8 8" className={clsx("absolute size-[8px] -translate-x-1/2", top)} style={{ left: at(1) }}>
                    <path d="m4 .5 3.500 3.500L4 7.500.5 4Z" fill="#c9d6e6" stroke="#111" strokeWidth=".8" />
                    <path d="M4 1v6" stroke="#4772b3" />
                </svg>
            ))}
        </div>
    );
}

function LayerFields({ labelWidth, dots }) {
    const dot = dots && <Icon name="dot" className="ml-[4px] size-[10px]" />;
    return (
        <div className="flex flex-col gap-[5px]">
            <div className="flex items-center">
                <span className={clsx("pr-2 text-right", labelWidth)}>Blend</span>
                <Select label="Blend" value="Regular" className="min-w-0 flex-1 bg-[#252525] pl-[6px]" />
                {dot}
            </div>
            <div className="flex items-center">
                <span className={clsx("pr-2 text-right", labelWidth)}>Opacity</span>
                <input
                    aria-label="Opacity"
                    defaultValue="1.000"
                    className="h-[17px] min-w-0 flex-1 rounded-[3px] bg-[#4772b3] text-center font-[DejaVu_Sans] outline-none"
                />
                {dot}
            </div>
            <div className="flex h-[17px] items-center">
                <span className={labelWidth} />
                <Check checked>Use Lights</Check>
                <span className="flex-1" />
                {dot}
            </div>
        </div>
    );
}

function LayerPanel() {
    return (
        <aside className="mt-px mr-[7px] ml-2 w-[179px] shrink-0 overflow-hidden rounded-t-[4px] bg-[#3d3d3d]">
            <button className="flex h-[22px] w-full items-center pr-1 pl-[4px]">
                <Icon name="chevron" className="mr-[2px] size-[14px]" />
                Layer
                <Icon name="grip" className="ml-auto size-[10px] text-[#999]" />
            </button>
            <div className="pt-[7px] pr-[7px]">
                <LayerFields labelWidth="w-[78px]" />
            </div>
            <div className="mt-[10px] flex h-[17px] items-center pl-[18px]">
                <Icon name="right" className="mr-[2px] size-[11px]" />
                <Check>Masks</Check>
            </div>
        </aside>
    );
}

function Playback() {
    return (
        <footer className="mt-[4px] flex h-[21px] shrink-0 items-center rounded-[4px] bg-[#303030] px-2">
            <MenuButton icon="clock" label="Editor type" />
            <Select label="Playback" value="Playback" className="ml-[7px] w-[59px] bg-[#282828] pr-px pl-[5px]" />
            <Select label="Keying" value="Keying" className="ml-px w-[51px] bg-[#282828] pl-[5px]" />
            <nav className="ml-[9px] flex gap-[13px]">
                <button>View</button>
                <button>Marker</button>
            </nav>
            <div className="mx-auto flex">
                <IconButton icon="record" label="Auto keying" className="w-[17px] rounded-l-[3px] bg-[#4772b3] text-white" size="size-[15px]" />
                <IconButton icon="chevron" label="Keying options" className="mr-[6px] w-[17px] rounded-r-[3px] bg-[#282828]" size="size-[12px]" />
                {["first", "prevKey", "back", "play", "nextKey", "last"].map((name) => (
                    <IconButton
                        key={name}
                        icon={name}
                        label={name}
                        className={clsx("mr-px w-[17px] bg-[#484848]", name.endsWith("Key") && "text-[#777]")}
                    />
                ))}
            </div>
            <input
                aria-label="Current frame"
                defaultValue="1"
                className="h-[17px] w-[65px] rounded-[3px] bg-[#4f4f4f] text-center font-[DejaVu_Sans] outline-none"
            />
            <div className="ml-[6px] flex gap-px">
                <IconButton icon="stopwatch" label="Preview range" className="w-[17px] rounded-l-[3px] bg-[#4f4f4f]" />
                <NumField label="Start" value="1" className="w-[76px] bg-[#4f4f4f] px-[12px]" />
                <NumField label="End" value="250" className="w-[73px] rounded-r-[3px] bg-[#4f4f4f] px-[12px]" />
            </div>
        </footer>
    );
}

const outlinerRows = [
    { name: "Scene Collection", depth: 0, icon: "archive" },
    { name: "Collection", depth: 1, icon: "archive", box: "bg-[#4a4a4a]", open: true, check: true, eye: true, cam: true },
    { name: "Stroke", depth: 2, icon: "gpObject", box: "bg-[#66646e] text-[#d79a68]", open: true, eye: true, cam: true, selected: true },
    { name: "Stroke", depth: 3, icon: "gpData", box: "text-[#1fb387]", open: true },
    { name: "Lines", depth: 4, icon: "pencilLine", box: "bg-[#555] text-[#1fb387]", eye: true },
    { name: "Fills", depth: 4, icon: "pencilLine", box: "text-[#1fb387]", eye: true },
    { name: "Camera", depth: 1, icon: "archive", open: true, check: true, eye: true, cam: true },
    { name: "Camera", depth: 2, icon: "movie", box: "text-[#d58a4c]", open: false, eye: true, cam: true, data: true },
];

function Outliner() {
    return (
        <section className="relative shrink-0 rounded-[4px] bg-[#282828] pb-[9px]">
            <div className="flex h-[24px] items-center rounded-t-[4px] px-[7px]">
                <MenuButton icon="tree" label="Editor type" />
                <MenuButton icon="images" label="Display mode" className="ml-[6px] w-[27px]" />
                <SearchBox className="mr-auto ml-[25px] w-[97px]" />
                <MenuButton icon="filter" label="Filter" className="w-[29px]" />
                <IconButton icon="newColl" label="New collection" className="ml-[6px] w-4 rounded-[3px] bg-[#484848]" />
            </div>
            <div className="grid h-[141px] grid-rows-8">
                {outlinerRows.map((row, i) => (
                    <div
                        key={i}
                        className={clsx("flex items-center pr-[11px]", row.selected && "bg-[#334d80] text-[#eda964]")}
                    >
                        <span className="flex w-[18px] shrink-0 justify-center text-white">
                            {row.selected && <Icon name="pencil" className="size-[13px]" />}
                        </span>
                        <span className="shrink-0" style={{ width: Math.max(0, row.depth - 1) * 18 }} />
                        {row.depth > 0 && (
                            <span className="flex w-[17px] shrink-0 justify-center text-[#c4c4c4]">
                                {row.open !== undefined && (
                                    <Icon name={row.open ? "down" : "play"} className="size-[9px]" />
                                )}
                            </span>
                        )}
                        <span className={clsx("mr-[3px] flex size-[17px] shrink-0 items-center justify-center rounded-[3px]", row.box)}>
                            <Icon name={row.icon} className="size-[13px]" />
                        </span>
                        <button>{row.name}</button>
                        {row.data && (
                            <span className="ml-[17px] flex size-[17px] items-center justify-center rounded-[3px] bg-[#5a5a5a] text-[#1fb387]">
                                <Icon name="movie" className="size-[13px]" />
                            </span>
                        )}
                        <span className="flex-1" />
                        {row.check && <Check label="Enabled" checked className="bg-[#e4e4e4]" mark="text-[#222]" />}
                        <span className="ml-[5px] flex w-[13px] text-[#e0e0e0]">{row.eye && <Icon name="eye" className="size-[12px]" />}</span>
                        <span className="ml-[5px] flex w-[12px] text-[#e0e0e0]">{row.cam && <Icon name="photo" className="size-[12px]" />}</span>
                    </div>
                ))}
            </div>
            <div className="absolute top-[58px] left-[26px] h-[67px] w-px bg-[#555]" />
            <div className="absolute top-[151px] left-[26px] h-[10px] w-px bg-[#555]" />
            <div className="absolute top-[30px] right-[2px] bottom-[14px] w-[2px] bg-[#3a3a3a]" />
            <svg viewBox="0 0 80 50" className="pointer-events-none absolute top-[90px] left-[76px] h-[50px] w-[80px]">
                <path d="M67 3C45 0 15 1 9 4 2 10 1 30 6 36c6 5 20 7 30 8 15-1 28 2 35-4 6-10 7-22 4-26C73 10 65 7 58 6" fill="none" stroke="#d3181c" strokeWidth="1.8" />
            </svg>
        </section>
    );
}

const tabGroups = [
    [["tools", "text-[#ccc]"]],
    [
        ["render", "text-[#ccc]"],
        ["printer", "text-[#bbb]"],
        ["images", "text-[#aaa]"],
        ["scene", "text-[#bbb]"],
        ["world", "text-[#c9515a]"],
    ],
    [["archiveLine", "text-[#ccc]"]],
    [
        ["object", "text-[#cf803a]"],
        ["wrench", "text-[#5f88d8]"],
        ["wand", "text-[#4e70b0]"],
        ["physics", "text-[#4f82c8]"],
        ["constraint", "text-[#5f84cc]"],
        ["gpData", "text-[#13c98c]"],
        ["material", "text-[#c2606c]"],
    ],
];

function PropertyTabs() {
    return (
        <nav className="relative flex w-[24px] shrink-0 flex-col gap-[6px] bg-[#1b1b1b] pt-[6px]">
            {tabGroups.map((group, i) => (
                <div key={i} className="flex flex-col">
                    {group.map(([name, color]) => (
                        <button key={name} aria-label={name} className={clsx("flex h-[25px] items-center justify-center", color)}>
                            <Icon name={name} className="size-[13px]" />
                        </button>
                    ))}
                </div>
            ))}
            <svg viewBox="0 0 42 34" className="pointer-events-none absolute top-[321px] -left-[3px] z-10 h-[34px] w-[42px]">
                <path d="M17 2C10 1 6 3 5 6 3 12 1 16 3 20c3 3 8 6 14 9 6 2 12 0 16-3 4-5 5-10 5-14-4-4-8-3-10-5-5-3-8-6-14-5" fill="none" stroke="#e01418" strokeWidth="1.6" />
            </svg>
        </nav>
    );
}

function LayersPanel() {
    const [active, setActive] = useState("Lines");

    return (
        <div className="mt-[9px] mr-[6px] flex-1 overflow-hidden rounded-t-[4px] bg-[#3d3d3d]">
            <button className="flex h-[24px] w-full items-center pr-[5px] pl-[4px]">
                <Icon name="chevron" className="mr-[2px] size-[14px]" />
                Layers
                <Icon name="grip" className="ml-auto size-[10px] text-[#999]" />
            </button>
            <div className="mt-[6px] flex gap-[9px] pr-[7px] pl-[9px]">
                <div className="relative flex h-[141px] flex-1 flex-col rounded-[4px] bg-[#2a2a2a] p-[4px]">
                    {layers.map((l) => (
                        <div
                            key={l.name}
                            className={clsx("flex h-[17px] items-center gap-[5px] rounded-[3px] pl-[24px]", active === l.name && "bg-[#45464c]")}
                        >
                            <button onClick={() => setActive(l.name)} className="flex-1 text-left">{l.name}</button>
                            <Icon name="dot" className="size-[13px] text-white" />
                            <Icon name="onion" className="size-[14px] text-white" />
                            <Icon name="eye" className="size-[12px] text-white" />
                            <Icon name="unlock" className="size-[13px] text-[#8a8a8a]" />
                        </div>
                    ))}
                    <div className="mt-auto flex items-center justify-between px-[3px]">
                        <Icon name="play" className="size-[8px]" />
                        <Icon name="grip" className="size-[10px]" />
                        <span className="w-[8px]" />
                    </div>
                    <svg viewBox="0 0 72 46" className="pointer-events-none absolute top-0 left-[16px] h-[46px] w-[72px]">
                        <path d="M53 3C35 0 15 1 6 8 0 16 2 28 9 35c10 7 28 8 42 5 10-4 18-12 17-20C67 11 58 7 46 8" fill="none" stroke="#c81e22" strokeWidth="1.8" />
                    </svg>
                </div>
                <div className="flex flex-col">
                    <IconButton icon="plus" label="Add layer" className="mb-px w-[17px] rounded-t-[3px] bg-[#545454]" size="size-[10px]" />
                    <IconButton icon="minus" label="Remove layer" className="mb-[6px] w-[17px] rounded-b-[3px] bg-[#545454]" size="size-[10px]" />
                    <IconButton icon="chevron" label="Layer specials" className="mb-[9px] w-[17px] rounded-[3px] bg-[#282828]" />
                    <IconButton icon="up" label="Move up" className="mb-px w-[17px] rounded-t-[3px] bg-[#545454]" size="size-[13px]" />
                    <IconButton icon="down" label="Move down" className="mb-[9px] w-[17px] rounded-b-[3px] bg-[#545454]" size="size-[13px]" />
                    <IconButton icon="screen" label="Isolate visibility" className="w-[17px] rounded-t-[3px] bg-[#545454] text-[#aaa]" />
                    <IconButton icon="lock" label="Isolate lock" className="w-[17px] rounded-b-[3px] bg-[#545454]" size="size-[12px]" />
                </div>
            </div>
            <div className="mt-[18px] pr-[11px] pl-[9px]">
                <LayerFields labelWidth="w-[96px]" dots />
            </div>
            <div className="mt-[8px] flex flex-col pl-5">
                <div className="flex h-[22px] items-center gap-[2px]">
                    <Icon name="right" className="size-[11px]" />
                    <Check>Masks</Check>
                </div>
                {["Transform", "Adjustments"].map((name) => (
                    <button key={name} className="flex h-[22px] items-center gap-[2px]">
                        <Icon name="right" className="size-[11px]" />
                        {name}
                    </button>
                ))}
            </div>
        </div>
    );
}

function Properties() {
    return (
        <section className="flex min-h-0 flex-1 flex-col rounded-[4px] bg-[#303030]">
            <div className="flex h-[21px] shrink-0 items-center px-[7px]">
                <MenuButton icon="props" label="Editor type" />
                <SearchBox className="mr-auto ml-[70px] w-[97px]" />
                <IconButton icon="chevron" label="Options" className="w-[17px] rounded-[3px] bg-[#282828]" size="size-[12px]" />
            </div>
            <div className="flex min-h-0 flex-1">
                <PropertyTabs />
                <div className="flex min-w-0 flex-1 flex-col overflow-hidden pl-[6px]">
                    <div className="flex h-[32px] shrink-0 items-center pr-[8px] pl-[3px]">
                        <Icon name="object" className="mr-[7px] size-[13px]" />
                        Stroke
                        <Icon name="right" className="mr-[6px] ml-[11px] size-[12px]" />
                        <Icon name="gpData" className="mr-[6px] size-[13px]" />
                        Stroke
                        <Icon name="pin" className="ml-auto size-[13px] text-[#999]" />
                    </div>
                    <div className="mt-[7px] mr-[6px] flex h-[17px] shrink-0 overflow-hidden rounded-[3px] bg-[#1d1d1d]">
                        <MenuButton icon="gpData" label="Browse data" className="w-[29px]" />
                        <input aria-label="Data name" defaultValue="Stroke" className="w-full min-w-0 bg-transparent px-[6px] outline-none" />
                        <IconButton icon="shield" label="Fake user" className="w-[18px] bg-[#545454] text-[#999]" />
                    </div>
                    <LayersPanel />
                </div>
            </div>
        </section>
    );
}

export default function App() {
    return (
        <div className="flex h-screen flex-col overflow-hidden bg-[#151515] pb-[2px] font-['Noto_Sans',sans-serif] text-[10px] leading-[14px] text-[#dcdcdc]">
            <TopBar />
            <main className="flex min-h-0 flex-1 gap-[3px]">
                <div className="flex min-w-0 flex-1 flex-col">
                    <ViewportHeader />
                    <ToolSettings />
                    <Viewport />
                    <section className="mt-[2px] flex shrink-0 flex-col">
                        <DopeHeader />
                        <div className="flex h-[124px] bg-[#1e1e1e]">
                            <ChannelList />
                            <Timeline />
                            <LayerPanel />
                        </div>
                    </section>
                    <Playback />
                </div>
                <div className="flex w-[301px] shrink-0 flex-col gap-[3px]">
                    <Outliner />
                    <Properties />
                </div>
            </main>
        </div>
    );
}
